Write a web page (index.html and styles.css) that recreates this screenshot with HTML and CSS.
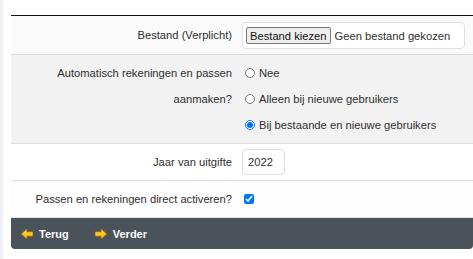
FILE: index.html
```html
<!DOCTYPE html>
<html lang="nl">
<head>
  <meta charset="UTF-8" />
  <meta name="viewport" content="width=device-width, initial-scale=1.0"/>
  <title>Importeren</title>
  <link rel="stylesheet" href="styles.css">
</head>
<body>

  <div class="page">
    <div class="form">

      <div class="row row-file">
        <div class="label">Bestand (Verplicht)</div>
        <div class="field">
          <div class="file-box">
            <button type="button" class="file-btn">Bestand kiezen</button>
            <span class="file-name">Geen bestand gekozen</span>
          </div>
        </div>
      </div>

      <div class="row row-auto">
        <div class="label">Automatisch rekeningen en passen aanmaken?</div>
        <div class="field">
          <label class="option"><input type="radio" name="auto"> Nee</label>
          <label class="option"><input type="radio" name="auto"> Alleen bij nieuwe gebruikers</label>
          <label class="option"><input type="radio" name="auto" checked> Bij bestaande en nieuwe gebruikers</label>
        </div>
      </div>

      <div class="row row-year">
        <div class="label">Jaar van uitgifte</div>
        <div class="field">
          <input type="text" class="year" value="2022">
        </div>
      </div>

      <div class="row row-activate">
        <div class="label">Passen en rekeningen direct activeren?</div>
        <div class="field">
          <input type="checkbox" class="check" checked>
        </div>
      </div>

    </div>

    <div class="actions">
      <a class="action" href="#">
        <svg class="arrow" width="12" height="10" viewBox="0 0 12 10">
          <defs>
            <linearGradient id="g1" x1="0" y1="0" x2="0" y2="1">
              <stop offset="0" stop-color="#ffe84d"/>
              <stop offset="1" stop-color="#f7a800"/>
            </linearGradient>
          </defs>
          <polygon points="0.5,5 5.5,0.5 5.5,3 11.5,3 11.5,7 5.5,7 5.5,9.5" fill="url(#g1)" stroke="#e89a00" stroke-width="0.8" stroke-linejoin="round"/>
        </svg>
        Terug
      </a>
      <a class="action" href="#">
        <svg class="arrow" width="12" height="10" viewBox="0 0 12 10">
          <defs>
            <linearGradient id="g2" x1="0" y1="0" x2="0" y2="1">
              <stop offset="0" stop-color="#ffe84d"/>
              <stop offset="1" stop-color="#f7a800"/>
            </linearGradient>
          </defs>
          <polygon points="11.5,5 6.5,0.5 6.5,3 0.5,3 0.5,7 6.5,7 6.5,9.5" fill="url(#g2)" stroke="#e89a00" stroke-width="0.8" stroke-linejoin="round"/>
        </svg>
        Verder
      </a>
    </div>
  </div>

</body>
</html>
```

FILE: styles.css
```css
body {
  margin: 0;
  min-height: 100vh;
  border-left: 3px solid #eef0f3;
  font-family: "Liberation Sans", Arial, sans-serif;
  font-size: 11.2px;
  color: #2f2f2f;
  background: #fff;
}

.page {
  padding: 15px 0 0 8px;
}

.form {
  border-top: 1px solid #111;
}

.row {
  display: grid;
  grid-template-columns: 230px 1fr;
  border-bottom: 1px solid #dcdcdc;
}

.row-file {
  background: #fafafa;
  padding-top: 1px;
}

.row-auto {
  background: #f2f2f2;
}

.row-year {
  background: #fff;
}

.row-activate {
  background: #fdfdfd;
  border-bottom-color: #e6e6e6;
}

.label {
  text-align: right;
  padding: 5px 9px 5px 0;
  line-height: 26px;
}

.row-file .label {
  line-height: 27px;
}

.field {
  padding: 5px 0;
  line-height: 26px;
}

/* file picker */
.file-box {
  display: flex;
  align-items: center;
  gap: 4px;
  width: 215px;
  height: 25px;
  margin-left: 1px;
  padding: 0 3px;
  border: 1px solid #e0e0e0;
  border-radius: 4px;
  background: #fff;
}

.file-btn {
  height: 17px;
  padding: 0 3px;
  font-family: inherit;
  font-size: 11.2px;
  color: #111;
  background: #efefef;
  border: 1px solid #767676;
  border-radius: 2px;
}

/* radio options */
.option {
  display: flex;
  align-items: center;
  height: 26px;
}

.option input {
  width: 10px;
  height: 10px;
  margin: 0 4px 0 4px;
}

/* year */
.year {
  box-sizing: border-box;
  width: 43px;
  height: 26px;
  margin-left: 1px;
  padding: 0 5px;
  font-family: inherit;
  font-size: 11.2px;
  color: #2f2f2f;
  border: 1px solid #dedede;
  border-radius: 4px;
  vertical-align: top;
}

/* checkbox */
.check {
  width: 10px;
  height: 10px;
  margin: 8px 0 0 3px;
  vertical-align: top;
}

/* bottom bar */
.actions {
  display: flex;
  align-items: center;
  gap: 26px;
  height: 31px;
  padding-left: 10px;
  background: #4a525a;
  border-radius: 0 0 4px 4px;
}

.action {
  display: flex;
  align-items: center;
  gap: 6px;
  color: #fff;
  font-size: 11px;
  font-weight: bold;
  text-decoration: none;
}

.arrow {
  display: block;
}
```
